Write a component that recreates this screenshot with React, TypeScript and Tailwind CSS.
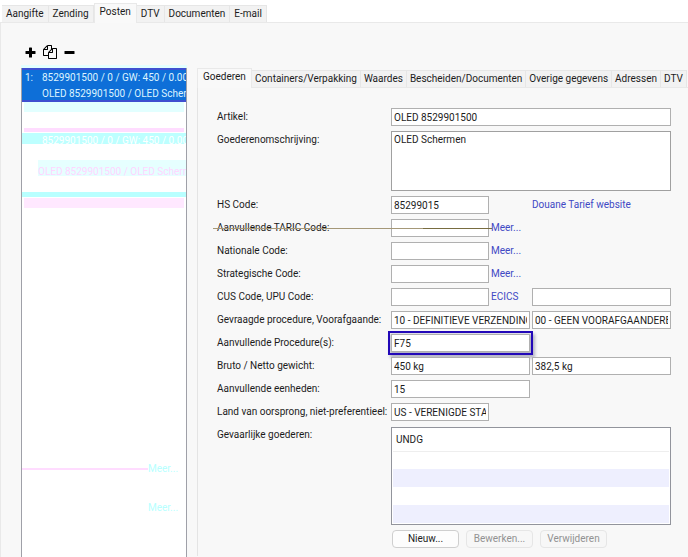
import { useState } from "react";
import type { ReactNode } from "react";

const MAIN_TABS = ["Aangifte", "Zending", "Posten", "DTV", "Documenten", "E-mail"];
const DETAIL_TABS = [
  "Goederen",
  "Containers/Verpakking",
  "Waardes",
  "Bescheiden/Documenten",
  "Overige gegevens",
  "Adressen",
  "DTV",
];

export default function App() {
  const [mainTab, setMainTab] = useState(2);
  const [detailTab, setDetailTab] = useState(0);

  return (
    <div className="flex min-h-screen flex-col overflow-hidden bg-white pt-[3px] font-[Roboto,'Open_Sans',sans-serif] text-[10px] leading-4 text-[#1c1c1c]">
      <TabBar tabs={MAIN_TABS} active={mainTab} onSelect={setMainTab} className="pl-[2px]" tabClassName="px-1" />

      <main className="flex flex-1 flex-col border-l border-[#e9e9e9] bg-[#f8f8f8]">
        <div className="flex items-center gap-[7px] pt-[22px] pb-[9px] pl-6 text-black">
          <button aria-label="Toevoegen">
            <svg className="size-[11px]" viewBox="0 0 11 11" fill="currentColor">
              <rect x="4" y="0.5" width="3" height="10" rx="0.6" />
              <rect x="0.5" y="4" width="10" height="3" rx="0.6" />
            </svg>
          </button>
          <button aria-label="Kopiëren">
            <svg className="size-[14px]" viewBox="0 0 1792 1792" fill="currentColor">
              <path d="M1696 384q40 0 68 28t28 68v1216q0 40-28 68t-68 28h-960q-40 0-68-28t-28-68v-288h-544q-40 0-68-28t-28-68v-672q0-40 20-88t48-76l408-408q28-28 76-48t88-20h416q40 0 68 28t28 68v328q68-40 128-40h416zm-544 213l-299 299h299v-299zm-640-384l-299 299h299v-299zm196 647l316-316v-416h-384v416q0 40-28 68t-68 28h-416v640h512v-256q0-40 20-88t48-76zm956 804v-1152h-384v416q0 40-28 68t-68 28h-416v640h896z" />
            </svg>
          </button>
          <button aria-label="Verwijderen">
            <svg className="size-[11px]" viewBox="0 0 11 11" fill="currentColor">
              <rect x="0.5" y="4" width="10" height="3" rx="0.6" />
            </svg>
          </button>
        </div>

        <div className="flex flex-1 gap-[10px] pl-5">
          <ItemList />

          <section className="flex min-w-0 flex-1 flex-col">
            <TabBar tabs={DETAIL_TABS} active={detailTab} onSelect={setDetailTab} className="" tabClassName="px-[3px]" />
            <GoodsForm />
          </section>
        </div>
      </main>
    </div>
  );
}

function TabBar({ tabs, active, onSelect, className, tabClassName }: {
  tabs: string[];
  active: number;
  onSelect: (i: number) => void;
  className: string;
  tabClassName: string;
}) {
  return (
    <div role="tablist" className={`flex items-end border-b border-[#e9e9e9] ${className}`}>
      {tabs.map((tab, i) => (
        <button
          key={tab}
          role="tab"
          aria-selected={i === active}
          onClick={() => onSelect(i)}
          className={
            i === active
              ? "-mb-px h-5 shrink-0 border-x border-t border-[#e9e9e9] bg-[#f9f9f9] px-[5px] pb-[3px] whitespace-nowrap"
              : `h-[17px] shrink-0 border-t border-r border-[#e6e6e6] bg-[#f2f2f2] whitespace-nowrap ${tabClassName}`
          }
        >
          {tab}
        </button>
      ))}
    </div>
  );
}

function ItemList() {
  return (
    <div className="w-[166px] shrink-0 overflow-hidden border-x border-[#9fa0a8] bg-white whitespace-nowrap shadow-[0_-3px_0_#e2ffff]">
      <button className="grid h-[34px] w-full grid-cols-[17px_1fr] overflow-hidden border-y-2 border-[#3f4fd0] bg-[#0e6fd8] pl-[3px] text-left text-[#dcf4ff]">
        <span>1:</span>
        <span>8529901500 / 0 / GW: 450 / 0.00 EUR</span>
        <span />
        <span>OLED 8529901500 / OLED Schermen</span>
      </button>

      {/* faded traces of earlier rows */}
      <div aria-hidden="true">
        <div className="mx-0.5 h-2.5 bg-[#e2ffff]" />
        <div className="mx-0.5 mt-4 h-1 bg-[#ffdcff]" />
        <div className="mt-px h-[11px] overflow-hidden bg-[#bdffff] pl-5 leading-4 text-white">
          8529901500 / 0 / GW: 450 / 0.00 EUR
        </div>
        <div className="mt-4 flex h-4 overflow-hidden">
          <div className="w-[3px] bg-[#bdffff]" />
          <div className="ml-4 flex-1 bg-[#e6ffff] leading-6 text-[#ffd6ff]">OLED 8529901500 / OLED Schermen</div>
        </div>
        <div className="mt-4 h-[5px] bg-[#b8ffff]" />
        <div className="mx-0.5 mt-px h-2.5 bg-[#ffe8ff]" />
        <div className="mt-[253px] flex items-center">
          <div className="h-0.5 w-[126px] bg-[#ffdcff]" />
          <span className="text-[#b8ffff]">Meer...</span>
        </div>
        <div className="mt-[23px] pl-[126px] text-[#b8ffff]">Meer...</div>
      </div>
    </div>
  );
}

function GoodsForm() {
  return (
    <form
      className="flex flex-col gap-[5px] border-l border-[#e4e4e4] pt-5 pr-[17px] pb-2 pl-[19px]"
      onSubmit={e => e.preventDefault()}
    >
      <Row id="artikel" label="Artikel:">
        <Field id="artikel" value="OLED 8529901500" className="col-span-2 w-full" />
      </Row>
      <Row id="omschrijving" label="Goederenomschrijving:">
        <textarea
          id="omschrijving"
          defaultValue="OLED Schermen"
          className="col-span-2 h-[60px] resize-none border border-[#a0a0a0] bg-white px-[2px]"
        />
      </Row>
      <Row id="hs" label="HS Code:">
        <Field id="hs" value="85299015" className="w-[98px]" />
        <Link>Douane Tarief website</Link>
      </Row>
      <div className="relative">
        <Row id="taric" label="Aanvullende TARIC Code:">
          <div className="flex gap-[2px]">
            <Field id="taric" value="" className="w-[98px]" />
            <Link>Meer...</Link>
          </div>
        </Row>
        <div className="pointer-events-none absolute top-[9px] -left-1 flex h-px w-[279px]">
          <div className="flex-1 bg-[#a59878]" />
          <div className="w-[69px] bg-[#786c40]" />
        </div>
      </div>
      <Row id="nationaal" label="Nationale Code:">
        <div className="flex gap-[2px]">
          <Field id="nationaal" value="" className="w-[98px]" />
          <Link>Meer...</Link>
        </div>
      </Row>
      <Row id="strategisch" label="Strategische Code:">
        <div className="flex gap-[2px]">
          <Field id="strategisch" value="" className="w-[98px]" />
          <Link>Meer...</Link>
        </div>
      </Row>
      <Row id="cus" label="CUS Code, UPU Code:">
        <div className="flex gap-[2px]">
          <Field id="cus" value="" className="w-[98px]" />
          <Link>ECICS</Link>
        </div>
        <Field id="upu" value="" label="UPU Code" className="w-full" />
      </Row>
      <Row id="procedure" label="Gevraagde procedure, Voorafgaande:">
        <Field id="procedure" value="10 - DEFINITIEVE VERZENDING," className="w-full" />
        <Field id="vooraf" value="00 - GEEN VOORAFGAANDERE" label="Voorafgaande" className="w-full" />
      </Row>
      <Row id="aanvullend" label="Aanvullende Procedure(s):">
        <Field
          id="aanvullend"
          value="F75"
          className="w-full shadow-[2px_3px_3px_3px_#b4b4c4] outline-2 outline-offset-1 outline-[#2208b8]"
        />
      </Row>
      <Row id="bruto" label="Bruto / Netto gewicht:">
        <Field id="bruto" value="450 kg" className="w-full" />
        <Field id="netto" value="382,5 kg" label="Netto gewicht" className="w-full" />
      </Row>
      <Row id="eenheden" label="Aanvullende eenheden:">
        <Field id="eenheden" value="15" className="w-full" />
      </Row>
      <Row id="land" label="Land van oorsprong, niet-preferentieel:">
        <Field id="land" value="US - VERENIGDE STATEN" className="w-[98px]" />
      </Row>
      <div className="grid grid-cols-[174px_minmax(0,1fr)] pt-px">
        <span id="gevaarlijk">Gevaarlijke goederen:</span>
        <div>
          <div className="border border-[#92949c] bg-white p-px">
            <table aria-labelledby="gevaarlijk" className="w-full">
              <thead>
                <tr className="h-[22px] border-b border-[#eeeeee]">
                  <th className="px-[3px] text-left font-normal">UNDG</th>
                </tr>
              </thead>
              <tbody>
                {[0, 1, 2, 3].map(row => (
                  <tr key={row} className="h-[18px] even:bg-[#eeeffe]">
                    <td />
                  </tr>
                ))}
              </tbody>
            </table>
          </div>
          <div className="flex gap-[7px] pt-[5px] pl-px">
            <FormButton>Nieuw...</FormButton>
            <FormButton disabled>Bewerken...</FormButton>
            <FormButton disabled>Verwijderen</FormButton>
          </div>
        </div>
      </div>
    </form>
  );
}

function Row({ id, label, children }: { id: string; label: string; children: ReactNode }) {
  return (
    <div className="grid grid-cols-[172px_minmax(0,1fr)_minmax(0,1fr)] gap-x-[2px]">
      <label htmlFor={id} className="pt-px whitespace-nowrap">{label}</label>
      {children}
    </div>
  );
}

function Field({ id, value, label, className }: { id: string; value: string; label?: string; className: string }) {
  return (
    <input
      id={id}
      type="text"
      aria-label={label}
      defaultValue={value}
      className={`h-[18px] border border-[#b0b0b0] bg-white px-[2px] ${className}`}
    />
  );
}

function Link({ children }: { children: ReactNode }) {
  return <a href="#" className="pt-px whitespace-nowrap text-[#4149c4]">{children}</a>;
}

function FormButton({ disabled, children }: { disabled?: boolean; children: ReactNode }) {
  return (
    <button
      disabled={disabled}
      className="h-[18px] w-[67px] rounded-sm border border-[#cfcfcf] bg-[#fdfdfd] whitespace-nowrap disabled:border-[#e6e6e6] disabled:bg-[#f7f7f7] disabled:text-[#929292]"
    >
      {children}
    </button>
  );
}
